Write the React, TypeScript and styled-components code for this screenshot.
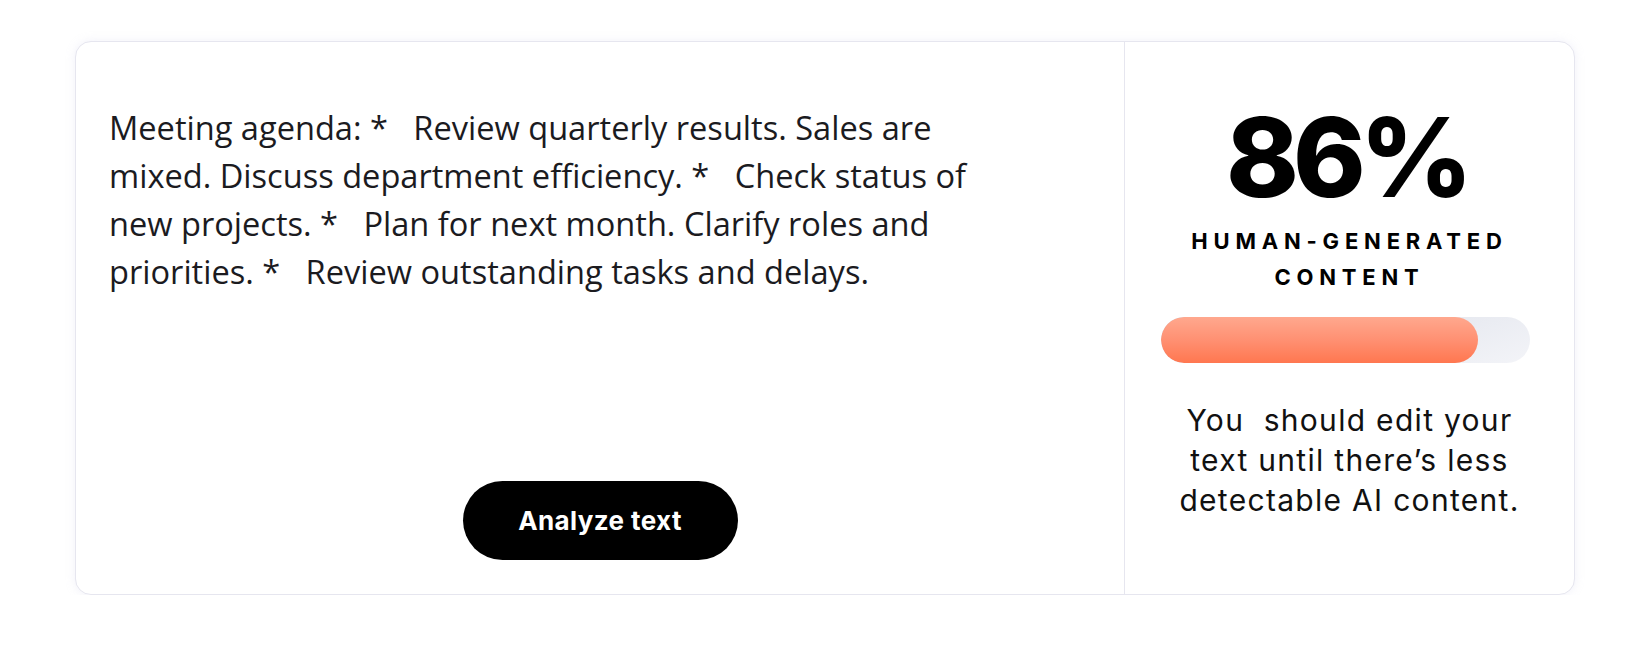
import React from "react";
import styled, { createGlobalStyle } from "styled-components";

const Global = createGlobalStyle`
  html, body { margin: 0; padding: 0; background: #ffffff; }
  * { box-sizing: border-box; }
`;

const Page = styled.div`
  padding: 41px 75px 0 75px;
`;

const Card = styled.div`
  display: flex;
  height: 554px;
  border: 1px solid #e6e6ef;
  border-radius: 16px;
  background: #ffffff;
  box-shadow: 0 0 10px rgba(200, 200, 230, 0.25);
  overflow: hidden;
`;

const EditorPane = styled.div`
  flex: 1;
  display: flex;
  flex-direction: column;
  padding: 62px 33px 34px 33px;
`;

const AgendaText = styled.div`
  flex: 1;
  max-width: 900px;
  font-family: "Open Sans", "Liberation Sans", sans-serif;
  font-size: 32.6px;
  line-height: 48px;
  color: #1b1b1f;
  white-space: pre-wrap;
`;

const AnalyzeButton = styled.button`
  align-self: center;
  width: 275px;
  height: 79px;
  border: none;
  border-radius: 40px;
  background: #000000;
  color: #ffffff;
  font-family: Inter, "Noto Sans", sans-serif;
  font-weight: 700;
  font-size: 26px;
  letter-spacing: 0.4px;
  cursor: pointer;
`;

const ResultPane = styled.div`
  width: 450px;
  border-left: 1px solid #e6e6ef;
  display: flex;
  flex-direction: column;
  align-items: center;
  padding-top: 60px;
`;

const Score = styled.div`
  font-family: Inter, "Noto Sans", sans-serif;
  font-weight: 800;
  font-size: 110px;
  line-height: 1;
  color: #000000;
  letter-spacing: -6px;
  margin-right: 6px;
`;

const ScoreLabel = styled.div`
  margin-top: 11px;
  font-family: Inter, "Noto Sans", sans-serif;
  font-weight: 700;
  font-size: 22px;
  line-height: 36px;
  letter-spacing: 5.8px;
  text-align: center;
  color: #000000;
  width: 340px;
`;

const Track = styled.div`
  margin-top: 22px;
  margin-right: 8px;
  width: 369px;
  height: 46px;
  border-radius: 23px;
  background: linear-gradient(160deg, #d6dae5 0%, #f3f4f8 100%);
  overflow: hidden;
`;

const Fill = styled.div`
  height: 100%;
  border-radius: 23px;
  background: linear-gradient(180deg, #ffa88e 0%, #ff9072 50%, #ff7750 100%);
`;

const Advice = styled.div`
  margin-top: 37px;
  width: 362px;
  font-family: Inter, "Noto Sans", sans-serif;
  font-weight: 400;
  font-size: 30px;
  line-height: 40px;
  letter-spacing: 1.3px;
  text-align: center;
  color: #111111;
  white-space: pre-wrap;
`;

const score = 86;

export default function App() {
  return (
    <>
      <Global />
      <Page>
        <Card>
          <EditorPane>
            <AgendaText>
              {"Meeting agenda: *   Review quarterly results. Sales are mixed. Discuss department efficiency. *   Check status of new projects. *   Plan for next month. Clarify roles and priorities. *   Review outstanding tasks and delays."}
            </AgendaText>
            <AnalyzeButton>Analyze text</AnalyzeButton>
          </EditorPane>
          <ResultPane>
            <Score>{score}%</Score>
            <ScoreLabel>HUMAN-GENERATED CONTENT</ScoreLabel>
            <Track>
              <Fill style={{ width: `${score}%` }} />
            </Track>
            <Advice>{"You  should edit your text until there’s less detectable AI content."}</Advice>
          </ResultPane>
        </Card>
      </Page>
    </>
  );
}
